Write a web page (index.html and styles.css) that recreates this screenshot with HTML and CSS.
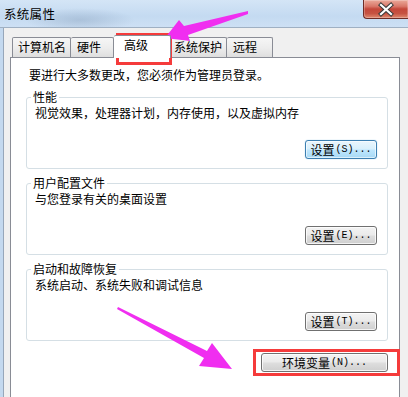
FILE: index.html
```html
<!DOCTYPE html>
<html lang="zh-CN">
<head>
<meta charset="utf-8">
<title>系统属性</title>
<link rel="stylesheet" href="styles.css">
</head>
<body>
<div class="window">
  <div class="titlebar">
    <span class="title">系统属性</span>
    <div class="close">
      <svg width="45" height="19" viewBox="0 0 45 19">
        <path d="M18 5 L28 14 M28 5 L18 14" stroke="#3b3b3b" stroke-width="4.2" stroke-linecap="square"/>
        <path d="M18 5 L28 14 M28 5 L18 14" stroke="#ffffff" stroke-width="2.2" stroke-linecap="square"/>
      </svg>
    </div>
  </div>
  <div class="frame">
    <div class="client">
      <div class="tabs">
        <div class="tab tab--computer">计算机名</div>
        <div class="tab tab--hardware">硬件</div>
        <div class="tab tab--advanced tab--active">高级</div>
        <div class="tab tab--protect">系统保护</div>
        <div class="tab tab--remote">远程</div>
      </div>
      <div class="panel">
        <p class="intro">要进行大多数更改，您必须作为管理员登录。</p>
        <fieldset class="group">
          <legend class="group-title">性能</legend>
          <p class="desc">视觉效果，处理器计划，内存使用，以及虚拟内存</p>
          <div class="actions"><button class="btn btn--default">设置<span class="ascii">(S)...</span></button></div>
        </fieldset>
        <fieldset class="group">
          <legend class="group-title">用户配置文件</legend>
          <p class="desc">与您登录有关的桌面设置</p>
          <div class="actions"><button class="btn">设置<span class="ascii">(E)...</span></button></div>
        </fieldset>
        <fieldset class="group">
          <legend class="group-title">启动和故障恢复</legend>
          <p class="desc">系统启动、系统失败和调试信息</p>
          <div class="actions"><button class="btn">设置<span class="ascii">(T)...</span></button></div>
        </fieldset>
        <div class="env-row"><button class="btn btn--wide">环境变量<span class="ascii">(N)...</span></button></div>
      </div>
    </div>
  </div>
  <svg class="annot" width="408" height="397" viewBox="0 0 408 397">
    <rect x="117.5" y="34.5" width="53" height="29" fill="none" stroke="#f53b3b" stroke-width="3"/>
    <rect x="254.5" y="350.5" width="144" height="24" fill="none" stroke="#f53b3b" stroke-width="3"/>
    <polygon points="165,38 179,20 184,26 248,11 248,14 188,35 190,41" fill="#f02ef0"/>
    <polygon points="232,369 212,343 207,351 118,307 117,309 204,358 199,366" fill="#f02ef0"/>
  </svg>
</div>
</body>
</html>
```
FILE: styles.css
```css
html, body {
  margin: 0;
  width: 408px;
  height: 397px;
  overflow: hidden;
}
body {
  position: relative;
  background: #f0f0f0;
  font-family: "Noto Sans CJK SC", "Noto Sans", sans-serif;
  font-size: 12px;
  line-height: 16px;
  color: #000;
}
.window {
  display: flex;
  flex-direction: column;
  height: 397px;
}
.titlebar {
  height: 27px;
  flex: none;
  display: flex;
  justify-content: space-between;
  align-items: flex-start;
  border-bottom: 1px solid #9fb0c3;
  background:
    radial-gradient(ellipse 55px 12px at 80px 20px, rgba(120, 145, 175, 0.35), rgba(120, 145, 175, 0)),
    linear-gradient(#d4e5f6, #c4daf1 60%, #cde0f4);
}
.title {
  margin: 6px 0 0 4px;
  font-size: 12.5px;
  letter-spacing: 0.3px;
}
.close {
  width: 45px;
  height: 19px;
  box-sizing: border-box;
  border: 1px solid #6e2c26;
  border-top: none;
  border-right: none;
  border-bottom-left-radius: 4px;
  background: linear-gradient(#eaa99a 0%, #d9786a 35%, #c4473a 50%, #c65342 75%, #e08a70 100%);
  box-shadow: inset 0 0 0 1px rgba(255, 255, 255, 0.25);
}
.close svg {
  display: block;
  margin-left: -1px;
}
.frame {
  flex: 1;
  min-height: 0;
  display: flex;
  border-left: 3px solid #c4d9ef;
}
.client {
  flex: 1;
  display: flex;
  flex-direction: column;
  border-left: 1px solid #97a7ba;
  padding: 7px 8px 0 6px;
  background: #f0f0f0;
}
.tabs {
  display: flex;
  flex: none;
  align-items: flex-end;
  height: 22px;
  margin-left: 2px;
}
.tab {
  box-sizing: border-box;
  height: 20px;
  padding: 1px 0 0 6px;
  border: 1px solid #898c95;
  border-bottom: none;
  border-radius: 2px 2px 0 0;
  background: linear-gradient(#f6f6f6, #ececec 55%, #dedede);
  white-space: nowrap;
}
.tab + .tab {
  border-left: none;
}
.tab--computer { width: 59px; padding-left: 5px; }
.tab--hardware { width: 43px; }
.tab--advanced { width: 57px; padding-left: 10px; }
.tab--protect { width: 57px; padding-left: 3px; }
.tab--remote { width: 46px; }
.tab--active {
  position: relative;
  z-index: 1;
  height: 23px;
  margin-bottom: -1px;
  background: #fff;
  border-left: 1px solid #898c95;
}
.tab--active + .tab {
  border-left: 1px solid #898c95;
  margin-left: -1px;
}
.panel {
  flex: 1;
  min-height: 0;
  border: 1px solid #898c95;
  border-bottom: none;
  background: #fff;
  padding: 9px 11px 0 15px;
}
.intro {
  margin: 0;
  padding-left: 3px;
}
.group {
  margin: 6px 0 0 0;
  padding: 0 10px 9px 8px;
  border: 1px solid #d5dfe5;
  border-radius: 3px;
  min-width: 0;
}
.group-title {
  margin-left: -4px;
  padding: 0 2px;
}
.desc {
  margin: 0;
}
.actions {
  display: flex;
  justify-content: flex-end;
  margin-top: 19px;
}
.btn {
  box-sizing: border-box;
  width: 72px;
  height: 19px;
  padding: 0;
  margin: 0;
  border: 1px solid #707070;
  border-radius: 3px;
  background: linear-gradient(#f3f3f3, #ebebeb 45%, #dddddd 55%, #cfcfcf);
  box-shadow: inset 0 0 0 1px rgba(255, 255, 255, 0.75);
  font-family: "Noto Sans CJK SC", "Noto Sans", sans-serif;
  font-size: 12px;
  line-height: 16px;
  color: #000;
  display: flex;
  align-items: center;
  justify-content: center;
}
.btn--default {
  border-color: #3c7fb1;
  background: linear-gradient(#eaf6fd, #d9f0fc 45%, #bee6fd 55%, #a7d9f5);
  box-shadow: inset 0 0 0 1px rgba(255, 255, 255, 0.6), 0 0 1px #6fb5e0;
}
.btn--wide {
  width: 127px;
}
.ascii {
  font-family: "Liberation Mono", monospace;
  font-size: 10px;
  margin-left: 1px;
}
.env-row {
  display: flex;
  justify-content: flex-end;
  margin-top: 12px;
}
.annot {
  position: absolute;
  left: 0;
  top: 0;
  pointer-events: none;
}
```
